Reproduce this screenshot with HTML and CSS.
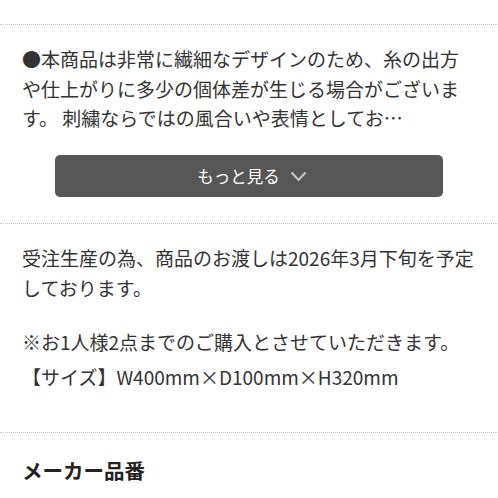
FILE: index.html
```html
<!DOCTYPE html>
<html lang="ja">
<head>
<meta charset="utf-8">
<link rel="stylesheet" href="styles.css">
</head>
<body>
<div class="page">
  <div class="top-space"></div>
  <section class="section desc">
    <p class="clamp">●本商品は非常に繊細なデザインのため、糸の出方や仕上がりに多少の個体差が生じる場合がございます。 刺繍ならではの風合いや表情としてお…</p>
    <button class="more" type="button">もっと見る<svg class="chev" width="17" height="11" viewBox="0 0 17 11"><path d="M1.5 1.5 L8.5 9 L15.5 1.5" fill="none" stroke="#c4c4c4" stroke-width="2.2"/></svg></button>
  </section>
  <section class="section info">
    <p class="p1">受注生産の為、商品のお渡しは2026年3月下旬を予定しております。</p>
    <p class="p2">※お1人様2点までのご購入とさせていただきます。</p>
    <p class="p3">【サイズ】W400mm×D100mm×H320mm</p>
  </section>
  <section class="section maker">
    <h2 class="title">メーカー品番</h2>
    <p class="code">TA-314</p>
  </section>
</div>
</body>
</html>
```

FILE: styles.css
```css
html, body {
  margin: 0;
  padding: 0;
  background: #fff;
}
body {
  font-family: "Noto Sans CJK JP", "Noto Sans", sans-serif;
  color: #333;
  overflow: hidden;
}
.page {
  width: 498px;
}
.top-space {
  height: 24px;
}
.section {
  border-top: 1px dotted #c4c4c4;
  padding: 0 22px;
}
p {
  margin: 0;
}
.desc {
  padding-top: 19px;
  padding-bottom: 26px;
}
.clamp {
  font-size: 19px;
  line-height: 29.5px;
  display: -webkit-box;
  -webkit-box-orient: vertical;
  -webkit-line-clamp: 3;
  overflow: hidden;
}
.more {
  display: flex;
  align-items: center;
  justify-content: center;
  gap: 10px;
  width: 388px;
  height: 42px;
  margin: 22px auto 0;
  background: #575757;
  border: none;
  border-radius: 5px;
  color: #fff;
  font-family: "Noto Sans CJK JP", sans-serif;
  font-size: 16.5px;
  padding: 0 0 0 6px;
}
.chev {
  display: block;
  margin-top: 1px;
}
.info {
  padding-top: 19px;
  padding-bottom: 40px;
  font-size: 19px;
  line-height: 30px;
}
.p2 {
  margin-top: 24px;
}
.p3 {
  margin-top: 5px;
}
.maker {
  padding-top: 22px;
}
.title {
  margin: 0;
  font-size: 20.5px;
  line-height: 30px;
  font-weight: 700;
  color: #222;
}
.code {
  margin-top: 12px;
  font-size: 16px;
  line-height: 24px;
  color: #444;
}
```
